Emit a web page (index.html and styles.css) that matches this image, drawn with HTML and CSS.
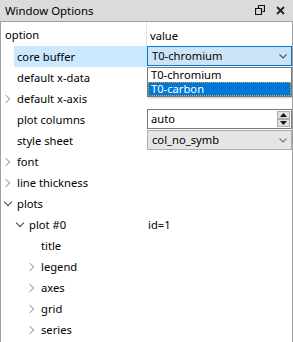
FILE: index.html
```html
<!DOCTYPE html>
<html lang="en">
<head>
  <meta charset="UTF-8" />
  <title>Window Options</title>
  <link rel="stylesheet" href="styles.css">
</head>
<body>

<div class="dock">
  <div class="titlebar">
    <span class="title">Window Options</span>
    <span class="tb-btns">
      <svg width="10" height="10" viewBox="0 0 10 10"><path d="M3.5 0.5h6v6h-2M0.5 3.5h6v6h-6z M3.5 0.5v3" fill="none" stroke="#111" stroke-width="1.2"/></svg>
      <svg width="9" height="9" viewBox="0 0 9 9"><path d="M1 1l7 7M8 1l-7 7" stroke="#222" stroke-width="1.8"/></svg>
    </span>
  </div>

  <div class="tree">
    <div class="head">
      <div class="c1">option</div>
      <div class="c2">value</div>
    </div>

    <div class="row">
      <div class="c1"><span class="branch l0"></span><span class="label sel">core buffer</span></div>
      <div class="c2">
        <div class="combo open">T0-chromium
          <svg class="chev" width="8" height="5" viewBox="0 0 8 5"><path d="M0.5 0.5l3.5 3.5 3.5-3.5" fill="none" stroke="#555" stroke-width="1.1"/></svg>
        </div>
        <div class="popup">
          <div class="item">T0-chromium</div>
          <div class="item picked">T0-carbon</div>
        </div>
      </div>
    </div>
    <div class="row">
      <div class="c1"><span class="branch l0"></span><span class="label">default x-data</span></div>
      <div class="c2"></div>
    </div>
    <div class="row">
      <div class="c1"><span class="branch l0"><i class="arr closed"></i></span><span class="label">default x-axis</span></div>
      <div class="c2"></div>
    </div>
    <div class="row">
      <div class="c1"><span class="branch l0"></span><span class="label">plot columns</span></div>
      <div class="c2">
        <div class="spin">auto
          <span class="spin-btns">
            <span class="sb"><svg width="7" height="4" viewBox="0 0 7 4"><path d="M0 4h7L3.5 0z" fill="#111"/></svg></span>
            <span class="sb"><svg width="7" height="4" viewBox="0 0 7 4"><path d="M0 0h7L3.5 4z" fill="#111"/></svg></span>
          </span>
        </div>
      </div>
    </div>
    <div class="row">
      <div class="c1"><span class="branch l0"></span><span class="label">style sheet</span></div>
      <div class="c2">
        <div class="combo">col_no_symb
          <svg class="chev" width="8" height="5" viewBox="0 0 8 5"><path d="M0.5 0.5l3.5 3.5 3.5-3.5" fill="none" stroke="#777" stroke-width="1.1"/></svg>
        </div>
      </div>
    </div>
    <div class="row">
      <div class="c1"><span class="branch l0"><i class="arr closed"></i></span><span class="label">font</span></div>
      <div class="c2"></div>
    </div>
    <div class="row">
      <div class="c1"><span class="branch l0"><i class="arr closed"></i></span><span class="label">line thickness</span></div>
      <div class="c2"></div>
    </div>
    <div class="row">
      <div class="c1"><span class="branch l0"><i class="arr open"></i></span><span class="label">plots</span></div>
      <div class="c2"></div>
    </div>
    <div class="row">
      <div class="c1"><span class="branch l1"><i class="arr open"></i></span><span class="label">plot #0</span></div>
      <div class="c2 txt">id=1</div>
    </div>
    <div class="row">
      <div class="c1"><span class="branch l2"></span><span class="label">title</span></div>
      <div class="c2"></div>
    </div>
    <div class="row">
      <div class="c1"><span class="branch l2"><i class="arr closed"></i></span><span class="label">legend</span></div>
      <div class="c2"></div>
    </div>
    <div class="row">
      <div class="c1"><span class="branch l2"><i class="arr closed"></i></span><span class="label">axes</span></div>
      <div class="c2"></div>
    </div>
    <div class="row">
      <div class="c1"><span class="branch l2"><i class="arr closed"></i></span><span class="label">grid</span></div>
      <div class="c2"></div>
    </div>
    <div class="row">
      <div class="c1"><span class="branch l2"><i class="arr closed"></i></span><span class="label">series</span></div>
      <div class="c2"></div>
    </div>
  </div>
</div>

</body>
</html>
```

FILE: styles.css
```css
* { box-sizing: border-box; margin: 0; padding: 0; }

body, html {
  font-family: 'Noto Sans', 'Segoe UI', sans-serif;
  font-size: 11.2px;
  color: #000;
  background: #fff;
  overflow: hidden;
}

.dock {
  width: 293px;
  height: 342px;
  display: flex;
  flex-direction: column;
}

.titlebar {
  height: 21px;
  flex: none;
  background: #dbdbdb;
  display: flex;
  align-items: center;
  justify-content: space-between;
  padding: 0 8px 1px 5px;
}

.title { font-size: 11.4px; }

.tb-btns {
  display: flex;
  align-items: center;
  gap: 11px;
}

.tree {
  flex: 1;
  border: 1px solid #a0a0a0;
  border-bottom: none;
  overflow: hidden;
}

.head, .row {
  display: flex;
}

.head { height: 24px; align-items: center; }
.head .c1 { padding: 2px 0 0 4px; border-right: 1px solid #e5e5e5; height: 24px; line-height: 22px; }
.head .c2 { padding: 2px 0 0 3px; }

.row { height: 21px; }

.c1 {
  width: 146px;
  flex: none;
  display: flex;
}

.c2 {
  flex: 1;
  position: relative;
  min-width: 0;
}

.c2.txt { padding-left: 1px; line-height: 21px; }

.branch {
  flex: none;
  display: flex;
  justify-content: flex-end;
}
.branch.l0 { width: 13px; }
.branch.l1 { width: 25px; }
.branch.l2 { width: 37px; }

.arr {
  width: 13px;
  height: 21px;
  position: relative;
}

.arr::before {
  content: '';
  position: absolute;
  width: 5px;
  height: 5px;
  border-right: 1.5px solid #a6a6a6;
  border-bottom: 1.5px solid #a6a6a6;
}

.arr.closed::before { left: 2px; top: 8px; transform: rotate(-45deg); }
.arr.open::before { left: 4px; top: 6px; transform: rotate(45deg); border-color: #404040; }

.label {
  flex: 1;
  padding-left: 3px;
  line-height: 21px;
  white-space: nowrap;
}

.label.sel { background: #cce8ff; }

.combo {
  height: 20px;
  border: 1px solid #adadad;
  background: #e5e5e5;
  padding-left: 4px;
  line-height: 18px;
  display: flex;
  align-items: center;
  justify-content: space-between;
}

.combo.open {
  background: #cce4f7;
  border-color: #0078d7;
}

.chev { margin-right: 4px; }

.popup {
  position: absolute;
  top: 21px;
  left: 0;
  right: 0;
  z-index: 5;
  background: #fff;
  border: 1px solid #767676;
  box-shadow: 1px 1px 2px rgba(0, 0, 0, 0.25);
}

.item {
  height: 14px;
  line-height: 14px;
  padding-left: 3px;
  overflow: hidden;
}

.item.picked {
  background: #0078d7;
  color: #fff;
  outline: 1px dotted #f5a040;
  outline-offset: -1px;
}

.spin {
  height: 20px;
  border: 1px solid #7a7a7a;
  background: #fff;
  padding-left: 3px;
  line-height: 18px;
  display: flex;
  justify-content: space-between;
}

.spin-btns {
  display: flex;
  flex-direction: column;
  padding: 1px 1px 1px 0;
}

.sb {
  width: 13px;
  height: 8px;
  border: 1px solid #adadad;
  background: #e1e1e1;
  display: flex;
  align-items: center;
  justify-content: center;
}
```
